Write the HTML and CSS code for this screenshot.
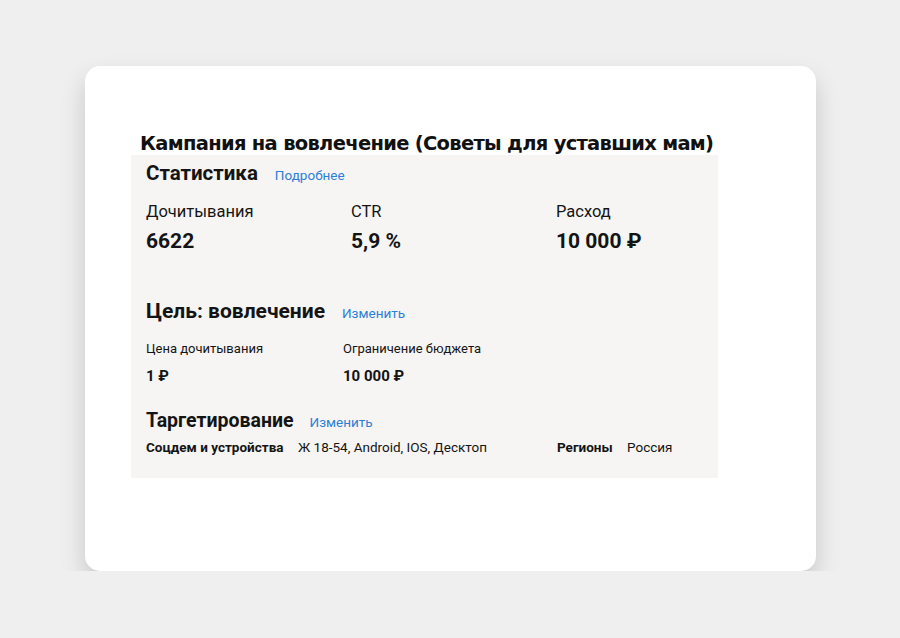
FILE: index.html
```html
<!DOCTYPE html>
<html lang="ru">
<head>
    <meta charset="UTF-8">
    <title>Кампания на вовлечение</title>
    <link rel="stylesheet" href="styles.css">
</head>
<body>
    <div class="card">
        <h1 class="campaign-title">Кампания на вовлечение (Советы для уставших мам)</h1>
        <div class="panel">
            <div class="section-head">
                <h2 class="stats-title">Статистика</h2>
                <a class="link link-small">Подробнее</a>
            </div>
            <div class="stats">
                <div class="stat">
                    <div class="stat-label">Дочитывания</div>
                    <div class="stat-value">6622</div>
                </div>
                <div class="stat">
                    <div class="stat-label">CTR</div>
                    <div class="stat-value">5,9 %</div>
                </div>
                <div class="stat">
                    <div class="stat-label">Расход</div>
                    <div class="stat-value">10 000 ₽</div>
                </div>
            </div>

            <div class="section-head goal-head">
                <h2 class="goal-title">Цель: вовлечение</h2>
                <a class="link">Изменить</a>
            </div>
            <div class="goal">
                <div class="goal-item">
                    <div class="goal-label">Цена дочитывания</div>
                    <div class="goal-value">1 ₽</div>
                </div>
                <div class="goal-item">
                    <div class="goal-label">Ограничение бюджета</div>
                    <div class="goal-value">10 000 ₽</div>
                </div>
            </div>

            <div class="section-head target-head">
                <h2 class="target-title">Таргетирование</h2>
                <a class="link">Изменить</a>
            </div>
            <div class="target">
                <b class="target-key">Соцдем и устройства</b>
                <span class="target-val">Ж 18-54, Android, IOS, Десктоп</span>
                <b class="target-key region-key">Регионы</b>
                <span class="target-val">Россия</span>
            </div>
        </div>
    </div>
</body>
</html>
```

FILE: styles.css
```css
* {
    margin: 0;
    padding: 0;
    box-sizing: border-box;
}

body {
    background: #efefef;
    font-family: Roboto, 'Noto Sans', sans-serif;
    color: #141414;
    padding-top: 66px;
}

.card {
    width: 731px;
    height: 505px;
    margin-left: 85px;
    background: #fff;
    border-radius: 15px;
    box-shadow: 0 12px 24px rgba(0, 0, 0, 0.17);
    padding: 67px 0 0 46px;
}

.campaign-title {
    font-family: 'DejaVu Sans', sans-serif;
    font-weight: bold;
    font-size: 19.5px;
    line-height: 22px;
    letter-spacing: -0.7px;
    margin-left: 9px;
    color: #111;
}

.panel {
    width: 587px;
    height: 323px;
    background: #f6f5f3;
    padding: 4px 0 0 15px;
}

.section-head {
    display: flex;
    align-items: baseline;
}

.stats-title {
    font-size: 20.5px;
    font-weight: 700;
    line-height: 28px;
    margin-right: 17px;
}

.link {
    color: #2c7fd6;
    font-size: 13.5px;
}

.stats {
    display: flex;
    margin-top: 14px;
}

.stat {
    width: 205px;
    flex-shrink: 0;
}

.stat-label {
    font-size: 16.5px;
    line-height: 22px;
}

.stat-value {
    font-size: 21px;
    font-weight: 700;
    line-height: 30px;
    margin-top: 3px;
}

.goal-head {
    margin-top: 41px;
}

.goal-title {
    font-size: 21px;
    font-weight: 700;
    line-height: 28px;
    margin-right: 17px;
}

.goal {
    display: flex;
    margin-top: 14px;
}

.goal-item {
    width: 197px;
    flex-shrink: 0;
}

.goal-label {
    font-size: 13px;
    line-height: 20px;
}

.goal-value {
    font-size: 15px;
    font-weight: 700;
    line-height: 20px;
    margin-top: 7px;
}

.target-head {
    margin-top: 23px;
}

.target-title {
    font-size: 19.5px;
    font-weight: 700;
    line-height: 24px;
    margin-right: 16px;
}

.target {
    display: flex;
    align-items: baseline;
    font-size: 13.5px;
    line-height: 20px;
    margin-top: 4px;
}

.target-key {
    font-weight: 700;
    width: 152px;
    flex-shrink: 0;
}

.target-val {
    width: 259px;
    flex-shrink: 0;
}

.region-key {
    width: 70px;
}

.target-val:last-child {
    width: auto;
}
```
